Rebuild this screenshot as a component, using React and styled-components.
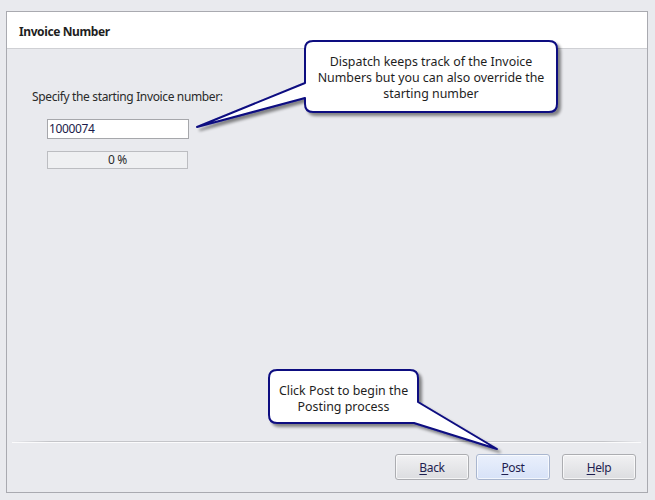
import React from 'react'
import styled, { createGlobalStyle } from 'styled-components'

const GlobalStyle = createGlobalStyle`
  html, body {
    margin: 0;
    padding: 0;
    background: #e9eaee;
  }
  body {
    font-family: "Noto Sans", "Open Sans", sans-serif;
    font-size: 12px;
    letter-spacing: -0.36px;
    color: #1e1e1e;
  }
`

const Page = styled.div`
  position: relative;
  width: 655px;
  height: 500px;
  padding: 11px 7px 7px 6px;
  box-sizing: border-box;
  overflow: hidden;
`

const Frame = styled.div`
  height: 482px;
  border: 1px solid #a9aab0;
  box-sizing: border-box;
  display: flex;
  flex-direction: column;
  background: #e9eaee;
`

const Header = styled.div`
  height: 37px;
  background: #fff;
  display: flex;
  align-items: center;
  padding-left: 12px;
  padding-top: 2px;
  box-sizing: border-box;
  border-bottom: 1px solid #cfd0d4;
  font-weight: 700;
  font-size: 12px;
  letter-spacing: -0.4px;
  color: #1e1e1e;
`

const Body = styled.div`
  flex: 1;
  padding: 40px 0 0 25px;
  display: flex;
  flex-direction: column;
  align-items: flex-start;
`

const Label = styled.div`
  line-height: 16px;
  color: #2a2a2a;
`

const Field = styled.div`
  margin: 14px 0 0 15px;
  width: 142px;
  height: 20px;
  box-sizing: border-box;
  background: #fff;
  border: 1px solid #a6a7ab;
  padding: 0 1px;
  line-height: 18px;
  color: #1b1b4a;
`

const Progress = styled.div`
  margin: 12px 0 0 15px;
  width: 141px;
  height: 18px;
  box-sizing: border-box;
  background: #eff0f2;
  border: 1px solid #bcbdc1;
  text-align: center;
  line-height: 16px;
  color: #2a2a2a;
`

const Separator = styled.div`
  margin: 0 6px 0 5px;
  height: 1px;
  background: linear-gradient(to right, #e9eaee, #c4c5c9 6%, #c4c5c9 94%, #e9eaee);
  border-bottom: 1px solid #fbfbfc;
`

const ButtonRow = styled.div`
  display: flex;
  justify-content: flex-end;
  padding: 11px 11px 12px 0;
`

const Button = styled.div`
  width: 74px;
  height: 26px;
  box-sizing: border-box;
  margin-left: ${p => p.$gap}px;
  border: 1px solid ${p => (p.$primary ? '#a9b6cf' : '#acadb1')};
  border-radius: 3px;
  background: ${p =>
    p.$primary
      ? 'linear-gradient(#eaf0fc, #d7e2f8)'
      : 'linear-gradient(#f1f1f3, #dcdde0)'};
  box-shadow: inset 0 0 0 1px rgba(255, 255, 255, 0.7);
  display: flex;
  align-items: center;
  justify-content: center;
  color: #1e1e50;
  font-size: 12px;

  u {
    text-underline-offset: 2px;
  }
`

const Callout = styled.div`
  position: absolute;
  left: ${p => p.$x}px;
  top: ${p => p.$y}px;
  width: ${p => p.$w}px;
  height: ${p => p.$h}px;
  display: flex;
  align-items: center;
  justify-content: center;
  text-align: center;
  font-size: 12.4px;
  letter-spacing: 0;
  line-height: 16px;
  color: #1e1e1e;
  padding-top: ${p => p.$shift}px;
  box-sizing: border-box;
`

const CalloutShape = styled.svg`
  position: absolute;
  left: 0;
  top: 0;
  overflow: visible;
  z-index: 0;
`

const CalloutText = styled.div`
  position: relative;
  z-index: 1;
`

function Bubble({ x, y, w, h, d, shift, children }) {
  return (
    <Callout $x={x} $y={y} $w={w} $h={h} $shift={shift}>
      <CalloutShape width={w} height={h}>
        <defs>
          <filter id={`sh${x}`} x="-50%" y="-50%" width="200%" height="200%">
            <feGaussianBlur in="SourceAlpha" stdDeviation="1.5" />
            <feOffset dx="3" dy="3" result="o" />
            <feComponentTransfer>
              <feFuncA type="linear" slope="0.45" />
            </feComponentTransfer>
            <feMerge>
              <feMergeNode />
              <feMergeNode in="SourceGraphic" />
            </feMerge>
          </filter>
        </defs>
        <path
          d={d}
          fill="#fff"
          stroke="#0a0a80"
          strokeWidth="2"
          strokeLinejoin="round"
          filter={`url(#sh${x})`}
        />
      </CalloutShape>
      <CalloutText>{children}</CalloutText>
    </Callout>
  )
}

export default function App() {
  return (
    <Page>
      <GlobalStyle />
      <Frame>
        <Header>Invoice Number</Header>
        <Body>
          <Label>Specify the starting Invoice number:</Label>
          <Field>1000074</Field>
          <Progress>0 %</Progress>
        </Body>
        <Separator />
        <ButtonRow>
          <Button $gap={0}>
            <span><u>B</u>ack</span>
          </Button>
          <Button $gap={7} $primary>
            <span><u>P</u>ost</span>
          </Button>
          <Button $gap={12}>
            <span><u>H</u>elp</span>
          </Button>
        </ButtonRow>
      </Frame>

      <Bubble
        x={305}
        y={41}
        w={252}
        h={71}
        shift={3}
        d="M8 0 H244 Q252 0 252 8 V63 Q252 71 244 71 H8 Q0 71 0 63 V57 L-108 86 L0 42 V8 Q0 0 8 0 Z"
      >
        Dispatch keeps track of the Invoice
        <br />
        Numbers but you can also override the
        <br />
        starting number
      </Bubble>

      <Bubble
        x={269}
        y={370}
        w={149}
        h={53}
        shift={4}
        d="M8 0 H141 Q149 0 149 8 V32 L228 79 L145 53 H8 Q0 53 0 45 V8 Q0 0 8 0 Z"
      >
        Click Post to begin the
        <br />
        Posting process
      </Bubble>
    </Page>
  )
}
